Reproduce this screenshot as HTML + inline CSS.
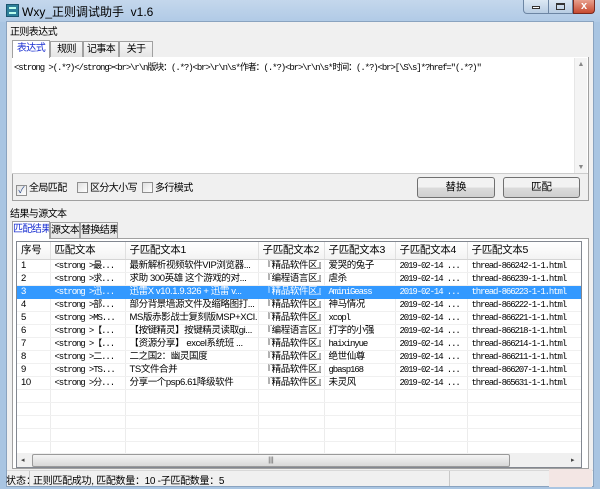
<!DOCTYPE html>
<html><head><meta charset="utf-8"><style>
*{margin:0;padding:0;box-sizing:border-box}
body{width:600px;height:489px;overflow:hidden;background:#a9c5e2;font-family:"Liberation Sans","Noto Sans CJK SC",sans-serif;font-size:11px;color:#000;position:relative}
.a{position:absolute;white-space:nowrap}
.mono{font-family:"Liberation Mono","Noto Sans CJK SC",monospace;font-size:9px;letter-spacing:-1.1px}
.tab{position:absolute;height:17px;border:1px solid #a0a0a0;border-bottom:none;background:linear-gradient(#f6f6f6,#e3e3e3);text-align:center;line-height:16px;font-size:10px;letter-spacing:-0.6px;white-space:nowrap;overflow:hidden}
.tab.on{background:#fff;color:#1a2fd0;height:18px;z-index:2}
.btn{position:absolute;border:1px solid #707070;border-radius:3px;background:linear-gradient(#f2f2f2 50%,#dcdcdc 50%,#cfcfcf);text-align:center;line-height:19px;font-size:10.5px}
.cb{display:inline-block;width:11px;height:11px;border:1px solid #8f8f8f;background:linear-gradient(135deg,#e0e0e0,#fff);vertical-align:-2px;margin-right:2px;font-size:9px;line-height:9px;text-align:center;color:#2a4a8a;letter-spacing:0}
.lbl{font-size:10px;letter-spacing:-0.6px}
table{border-collapse:collapse;table-layout:fixed}
td{height:13px;line-height:12px;padding-left:4px;white-space:nowrap;overflow:hidden;border-right:1px solid #ececec;border-bottom:1px solid #f0f0f0;font-size:9.5px;letter-spacing:-0.4px}
td.mono{font-size:9px;letter-spacing:-1.1px}
tr.sel td{background:#3399ff;color:#fff;border-color:#3399ff}
tr.h td{height:17px;line-height:16px;font-size:10.5px;letter-spacing:-0.3px;border-bottom:1px solid #d5d5d5;border-right:1px solid #e0e0e0}
</style></head><body>
<div class="a" style="left:0;top:0;width:600px;height:22px;background:linear-gradient(#c4d7ec,#b0cae6)"></div>
<div class="a" style="left:6px;top:4px;width:13px;height:13px;background:#2d7f9a;border:1px solid #1b5670"><div style="margin:2px;height:7px;border-top:2px solid #bfe;border-bottom:2px solid #bfe"></div></div>
<div class="a" style="left:22px;top:3px;font-size:12px;color:#000">Wxy_正则调试助手&nbsp; v1.6</div>
<div class="a" style="left:523px;top:0;width:26px;height:14px;border:1px solid #6d86a4;border-top:none;border-radius:0 0 0 4px;background:linear-gradient(#dce8f4,#b8cde3)"><div style="margin:6px 8px 0;height:3px;border:1px solid #333;background:#fff"></div></div>
<div class="a" style="left:549px;top:0;width:24px;height:14px;border:1px solid #6d86a4;border-top:none;border-left:none;background:linear-gradient(#dce8f4,#b8cde3)"><div style="margin:3px 7px 0;height:7px;border:1px solid #333;border-top-width:2px"></div></div>
<div class="a" style="left:573px;top:0;width:22px;height:14px;border:1px solid #7a2a20;border-top:none;border-radius:0 0 4px 0;background:linear-gradient(#e8a08e,#c74a30);color:#fff;font-weight:bold;text-align:center;line-height:13px;font-size:11px">x</div>
<div class="a" style="left:6px;top:21px;width:588px;height:466px;background:#f0f0f0;border:1px solid #8aa3bf"></div>
<div class="a lbl" style="left:10px;top:23px">正则表达式</div>
<div class="tab on" style="left:12px;top:40px;width:38px">表达式</div>
<div class="tab" style="left:50px;top:41px;width:33px">规则</div>
<div class="tab" style="left:83px;top:41px;width:36px">记事本</div>
<div class="tab" style="left:119px;top:41px;width:34px">关于</div>
<div class="a" style="left:12px;top:57px;width:577px;height:144px;border:1px solid #a0a0a0;background:#f0f0f0"></div>
<div class="a" style="left:12px;top:57px;width:576px;height:117px;background:#fff;border-bottom:1px solid #ccc"></div>
<div class="a mono" style="left:14px;top:60px">&lt;strong &gt;(.*?)&lt;/strong&gt;&lt;br&gt;\r\n版块：(.*?)&lt;br&gt;\r\n\s*作者：(.*?)&lt;br&gt;\r\n\s*时间：(.*?)&lt;br&gt;[\S\s]*?href="(.*?)"</div>
<div class="a" style="left:574px;top:58px;width:13px;height:115px;background:#f4f4f4;border-left:1px solid #e6e6e6;color:#888;font-size:7px;text-align:center"><div style="margin-top:3px">▲</div><div style="margin-top:96px">▼</div></div>
<div class="a lbl" style="left:16px;top:179px"><span class="cb">✓</span>全局匹配</div>
<div class="a lbl" style="left:77px;top:179px"><span class="cb"></span>区分大小写</div>
<div class="a lbl" style="left:142px;top:179px"><span class="cb"></span>多行模式</div>
<div class="btn" style="left:417px;top:177px;width:78px;height:21px">替换</div>
<div class="btn" style="left:503px;top:177px;width:77px;height:21px">匹配</div>
<div class="a lbl" style="left:10px;top:205px">结果与源文本</div>
<div class="tab on" style="left:12px;top:221px;width:38px">匹配结果</div>
<div class="tab" style="left:50px;top:222px;width:30px">源文本</div>
<div class="tab" style="left:80px;top:222px;width:38px">替换结果</div>
<div class="a" style="left:12px;top:238px;width:577px;height:231px;border:1px solid #a0a0a0;background:#fff"></div>
<div class="a" style="left:16px;top:241px;width:566px;height:227px;border:1px solid #828790;background:#fff;overflow:hidden">
<table style="width:565px">
<colgroup><col style="width:33px"><col style="width:75px"><col style="width:133px"><col style="width:66px"><col style="width:71px"><col style="width:72px"><col style="width:115px"></colgroup>
<tr class="h" style="background:linear-gradient(#fff,#f3f3f3)"><td>序号</td><td>匹配文本</td><td>子匹配文本1</td><td>子匹配文本2</td><td>子匹配文本3</td><td>子匹配文本4</td><td>子匹配文本5</td></tr>
<tr><td>1</td><td class="mono">&lt;strong &gt;最...</td><td>最新解析视频软件VIP浏览器...</td><td>『精品软件区』</td><td>爱哭的兔子</td><td class="mono">2019-02-14 ...</td><td class="mono">thread-866242-1-1.html</td></tr>
<tr><td>2</td><td class="mono">&lt;strong &gt;求...</td><td>求助 300英雄 这个游戏的对...</td><td>『编程语言区』</td><td>虐杀</td><td class="mono">2019-02-14 ...</td><td class="mono">thread-866239-1-1.html</td></tr>
<tr class="sel"><td>3</td><td class="mono">&lt;strong &gt;迅...</td><td>迅雷X v10.1.9.326 + 迅雷 v...</td><td>『精品软件区』</td><td class="mono">AminiGeass</td><td class="mono">2019-02-14 ...</td><td class="mono">thread-866223-1-1.html</td></tr>
<tr><td>4</td><td class="mono">&lt;strong &gt;部...</td><td>部分背景墙源文件及缩略图打...</td><td>『精品软件区』</td><td>神马情况</td><td class="mono">2019-02-14 ...</td><td class="mono">thread-866222-1-1.html</td></tr>
<tr><td>5</td><td class="mono">&lt;strong &gt;MS...</td><td>MS版赤影战士复刻版MSP+XCI...</td><td>『精品软件区』</td><td class="mono">xcopl</td><td class="mono">2019-02-14 ...</td><td class="mono">thread-866221-1-1.html</td></tr>
<tr><td>6</td><td class="mono">&lt;strong &gt;【...</td><td>【按键精灵】按键精灵读取gi...</td><td>『编程语言区』</td><td>打字的小强</td><td class="mono">2019-02-14 ...</td><td class="mono">thread-866218-1-1.html</td></tr>
<tr><td>7</td><td class="mono">&lt;strong &gt;【...</td><td>【资源分享】 excel系统班 ...</td><td>『精品软件区』</td><td class="mono">haixinyue</td><td class="mono">2019-02-14 ...</td><td class="mono">thread-866214-1-1.html</td></tr>
<tr><td>8</td><td class="mono">&lt;strong &gt;二...</td><td>二之国2：幽灵国度</td><td>『精品软件区』</td><td>绝世仙尊</td><td class="mono">2019-02-14 ...</td><td class="mono">thread-866211-1-1.html</td></tr>
<tr><td>9</td><td class="mono">&lt;strong &gt;TS...</td><td>TS文件合并</td><td>『精品软件区』</td><td class="mono">gbasp168</td><td class="mono">2019-02-14 ...</td><td class="mono">thread-866207-1-1.html</td></tr>
<tr><td>10</td><td class="mono">&lt;strong &gt;分...</td><td>分享一个psp6.61降级软件</td><td>『精品软件区』</td><td>未灵风</td><td class="mono">2019-02-14 ...</td><td class="mono">thread-865631-1-1.html</td></tr>
<tr><td></td><td></td><td></td><td></td><td></td><td></td><td></td></tr>
<tr><td></td><td></td><td></td><td></td><td></td><td></td><td></td></tr>
<tr><td></td><td></td><td></td><td></td><td></td><td></td><td></td></tr>
<tr><td></td><td></td><td></td><td></td><td></td><td></td><td></td></tr>
<tr><td></td><td></td><td></td><td></td><td></td><td></td><td></td></tr>
</table>
<div class="a" style="left:0;top:211px;width:566px;height:15px;background:#f0f0f0;font-size:7px;color:#444">
<span class="a" style="left:4px;top:3px">◂</span>
<div class="a" style="left:15px;top:1px;width:478px;height:13px;border:1px solid #9a9a9a;border-radius:2px;background:linear-gradient(#f4f4f4,#d8d8d8);text-align:center;line-height:11px">|||</div>
<span class="a" style="left:554px;top:3px">▸</span>
</div>
</div>
<div class="a" style="left:7px;top:470px;width:586px;height:16px;background:#f0f0f0;border-top:1px solid #d8d8d8"></div>
<div class="a" style="left:6px;top:472px;font-size:10px">状态：</div>
<div class="a" style="left:29px;top:471px;width:1px;height:15px;background:#c8c8c8"></div>
<div class="a" style="left:33px;top:472px;font-size:10px;letter-spacing:-0.3px">正则匹配成功, 匹配数量：10 -子匹配数量：5</div>
<div class="a" style="left:449px;top:471px;width:1px;height:15px;background:#c8c8c8"></div>
<div class="a" style="left:549px;top:469px;width:43px;height:18px;background:#f3e6e4"></div>
</body></html>
